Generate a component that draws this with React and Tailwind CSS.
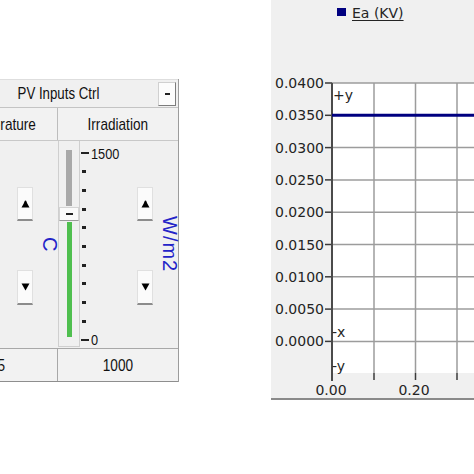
import React from "react";

const panelFont = { fontFamily: '"Liberation Sans", Arial, sans-serif' };

function TriUp() {
  return (
    <svg width="9" height="8" viewBox="0 0 9 8">
      <path d="M4.5 0.5 C3.5 0.5 3.2 2.5 2.6 3.8 L0.5 7.5 L8.5 7.5 L6.4 3.8 C5.8 2.5 5.5 0.5 4.5 0.5 Z" fill="#000" />
    </svg>
  );
}

function TriDown() {
  return (
    <svg width="9" height="8" viewBox="0 0 9 8">
      <path d="M0.5 0.5 L8.5 0.5 L4.5 7.5 Z" fill="#000" />
    </svg>
  );
}

function SpinButton({ children, h }) {
  return (
    <div
      className={`flex w-[16px] ${h} items-center justify-center border border-[#e0e0e0] border-b-2 border-b-[#8c8c8c] bg-[#fbfbfb]`}
    >
      {children}
    </div>
  );
}

function Slider() {
  return (
    <div className="flex h-[206px] w-[22px] shrink-0 flex-col items-center border-x border-b border-[#cfcfcf] pt-[9px]">
      <div className="h-[56px] w-[6px] bg-[#a9a9a9]" />
      <div className="mt-[1px] flex h-[14px] w-[20px] items-center justify-center border border-[#d4d4d4] border-b-[#9a9a9a] bg-[#fafafa]">
        <div className="h-[2px] w-[7px] bg-[#222]" />
      </div>
      <div className="mt-[1px] h-[115px] w-[5px] bg-[#4fbf4f]" />
    </div>
  );
}

function Scale({ top, bottom }) {
  const mids = Array.from({ length: 9 });
  return (
    <div className="flex h-[207px] w-[57px] shrink-0 flex-col justify-between pt-[6px] pb-[2px]">
      <div className="flex h-[12px] items-center">
        <div className="ml-[1px] h-[2px] w-[8px] bg-[#222]" />
        {top ? (
          <span className="ml-[2px] inline-block origin-left scale-x-[0.85] text-[15px] leading-none text-[#111]">
            {top}
          </span>
        ) : null}
      </div>
      {mids.map((_, i) => (
        <div key={i} className="flex h-[12px] items-center">
          <div className="ml-[2px] h-[3px] w-[4px] bg-[#222]" />
        </div>
      ))}
      <div className="flex h-[12px] items-center">
        <div className="ml-[1px] h-[2px] w-[8px] bg-[#222]" />
        {bottom ? (
          <span className="ml-[2px] inline-block origin-left scale-x-[0.85] text-[15px] leading-none text-[#111]">
            {bottom}
          </span>
        ) : null}
      </div>
    </div>
  );
}

function InputColumn({ top, bottom, unit, tracking }) {
  return (
    <div className="flex h-[207px] w-[120px] shrink-0">
      <Slider />
      <Scale top={top} bottom={bottom} />
      <div className="flex w-[16px] shrink-0 flex-col pt-[46px]">
        <SpinButton h="h-[34px]">
          <TriUp />
        </SpinButton>
        <div className="h-[49px]" />
        <SpinButton h="h-[35px]">
          <TriDown />
        </SpinButton>
      </div>
      <div className="w-[10px] shrink-0" />
      <div className="flex w-[14px] shrink-0 items-center justify-center">
        <span
          className={`text-[20px] leading-none text-[#2424c8] [writing-mode:vertical-rl] ${tracking}`}
        >
          {unit}
        </span>
      </div>
    </div>
  );
}

function Cell({ children, className = "" }) {
  return (
    <div className={`flex w-[120px] items-center justify-center ${className}`}>
      <span className="inline-block scale-x-[0.8] text-[17px] leading-none text-[#111]">
        {children}
      </span>
    </div>
  );
}

function InputsPanel() {
  return (
    <div className="mt-[79px] w-[180px] shrink-0 overflow-hidden" style={panelFont}>
      <div className="-ml-[62px] w-[241px] border-r border-[#9c9c9c] bg-[#f0f0f0]">
        {/* Title bar */}
        <div className="flex h-[29px] items-center border-t border-b border-[#c4c4c4] border-t-[#dedede]">
          <div className="w-[20px] shrink-0" />
          <div className="flex flex-1 items-center justify-center">
            <span className="inline-block scale-x-[0.78] text-[17px] leading-none text-[#111]">
              PV Inputs Ctrl
            </span>
          </div>
          <div className="mr-[2px] flex h-[24px] w-[18px] shrink-0 items-center justify-center border border-[#d0d0d0] border-r-[#7c7c7c] border-b-[#7c7c7c] bg-[#fcfcfc]">
            <div className="h-[2px] w-[5px] bg-[#222]" />
          </div>
        </div>
        {/* Header row */}
        <div className="flex h-[33px] border-b border-[#c8c8c8] bg-[#f2f2f2]">
          <Cell className="border-r border-[#bdbdbd]">Temperature</Cell>
          <Cell>Irradiation</Cell>
        </div>
        {/* Body */}
        <div className="flex h-[207px]">
          <InputColumn top="" bottom="" unit="C" tracking="" />
          <InputColumn top="1500" bottom="0" unit="W/m2" tracking="tracking-[1px]" />
        </div>
        {/* Value row */}
        <div className="flex h-[34px] border-t border-b border-[#a8a8a8] border-b-[#8e8e8e] bg-[#f2f2f2]">
          <Cell className="border-r border-[#a8a8a8]">25</Cell>
          <Cell>1000</Cell>
        </div>
      </div>
    </div>
  );
}

function ChartPlot() {
  const ys = Array.from({ length: 9 }, (_, k) => 83 + 32.3 * k);
  const labels = ["0.0400", "0.0350", "0.0300", "0.0250", "0.0200", "0.0150", "0.0100", "0.0050", "0.0000"];
  const xs = [374, 415.5, 457];
  const tf = { fontFamily: '"DejaVu Sans", Verdana, sans-serif', fontSize: 14, fill: "#242424" };
  return (
    <svg width="203" height="368" viewBox="0 0 203 368" className="block">
      <g transform="translate(-271 -30)">
        <rect x="332" y="83" width="150" height="290" fill="#ffffff" />
        {ys.map((y, i) => (
          <line key={"h" + i} x1="332" y1={y} x2="480" y2={y} stroke="#9c9c9c" strokeWidth="1.5" />
        ))}
        {ys.map((y, i) => (
          <line key={"t" + i} x1="325" y1={y} x2="332" y2={y} stroke="#3a3a3a" strokeWidth="1.5" />
        ))}
        {xs.map((x, i) => (
          <line key={"v" + i} x1={x} y1="83" x2={x} y2="373" stroke="#9c9c9c" strokeWidth="1.5" />
        ))}
        {xs.map((x, i) => (
          <line key={"b" + i} x1={x} y1="373" x2={x} y2="380" stroke="#3a3a3a" strokeWidth="1.5" />
        ))}
        <line x1="332" y1="83" x2="332" y2="381" stroke="#4a4a4a" strokeWidth="2" />
        <line x1="332" y1="115.3" x2="480" y2="115.3" stroke="#000080" strokeWidth="3" />
        {ys.map((y, i) => (
          <text key={"l" + i} x="324" y={y + 5} textAnchor="end" style={tf}>
            {labels[i]}
          </text>
        ))}
        <text x="333" y="100" style={tf}>+y</text>
        <text x="332" y="337" style={tf}>-x</text>
        <text x="332" y="371" style={tf}>-y</text>
        <text x="331" y="395" textAnchor="middle" style={tf}>0.00</text>
        <text x="414" y="395" textAnchor="middle" style={tf}>0.20</text>
      </g>
    </svg>
  );
}

function ChartPanel() {
  return (
    <div className="ml-[91px] h-[400px] w-[203px] shrink-0 border-b-2 border-[#8a8a8a] bg-[#f0f0f0]">
      <div
        className="flex h-[30px] items-start pt-[5px] pl-[66px]"
        style={{ fontFamily: '"DejaVu Sans", Verdana, sans-serif' }}
      >
        <div className="mt-[3px] h-[8px] w-[9px] bg-[#000080]" />
        <span className="ml-[6px] text-[14px] leading-[17px] text-[#242424] underline underline-offset-2">
          Ea (KV)
        </span>
      </div>
      <ChartPlot />
    </div>
  );
}

export default function App() {
  return (
    <div className="flex h-[474px] w-[474px] items-start overflow-hidden bg-white">
      <InputsPanel />
      <ChartPanel />
    </div>
  );
}
